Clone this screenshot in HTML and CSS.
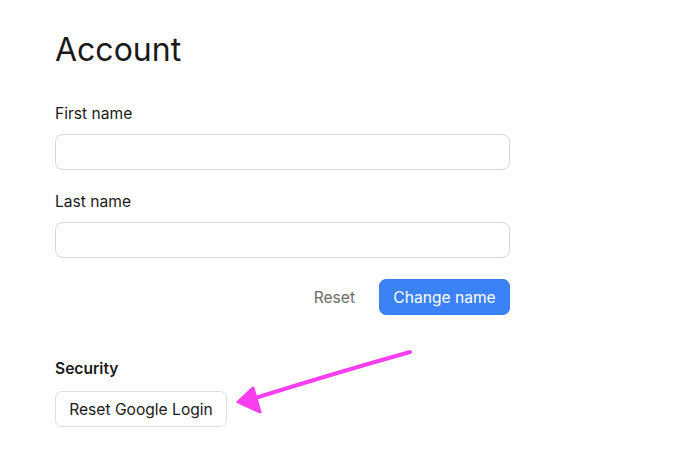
FILE: index.html
```html
<!DOCTYPE html>
<html lang="en">
<head>
    <meta charset="utf-8"/>
    <title>Account</title>
    <link rel="stylesheet" href="styles.css">
</head>
<body>
    <div class="page">
        <h1>Account</h1>

        <form class="name-form">
            <label class="field">
                <span class="label">First name</span>
                <input type="text" class="input">
            </label>
            <label class="field">
                <span class="label">Last name</span>
                <input type="text" class="input">
            </label>
            <div class="actions">
                <button type="button" class="btn-link">Reset</button>
                <button type="button" class="btn-primary">Change name</button>
            </div>
        </form>

        <div class="security">
            <h2>Security</h2>
            <button type="button" class="btn-outline">Reset Google Login</button>
        </div>
    </div>

    <!-- annotation arrow -->
    <svg class="arrow" width="690" height="469" viewBox="0 0 690 469">
        <path d="M410 352 C 360 366, 300 384, 252 399" fill="none" stroke="#f73ff0" stroke-width="4" stroke-linecap="round"/>
        <polygon points="238,402 253,388 260,412" fill="#f73ff0" stroke="#f73ff0" stroke-width="3" stroke-linejoin="round"/>
    </svg>
</body>
</html>
```

FILE: styles.css
```css
body {
    margin: 0;
    background: #fff;
    color: #1a1a1a;
    font-family: 'Inter', 'Liberation Sans', sans-serif;
}

.page {
    width: 455px;
    padding: 28px 0 0 55px;
}

h1 {
    font-size: 32px;
    font-weight: 400;
    margin: 0 0 30px;
    line-height: 44px;
}

.field {
    display: block;
    margin-bottom: 20px;
}

.label {
    display: block;
    font-size: 15.6px;
    line-height: 20px;
    padding-top: 2px;
    margin-bottom: 10px;
}

.input {
    display: block;
    box-sizing: border-box;
    width: 100%;
    height: 36px;
    border: 1px solid #d6d6d6;
    border-radius: 8px;
    background: #fff;
    font-family: inherit;
    font-size: 15px;
    padding: 0 12px;
}

.actions {
    display: flex;
    justify-content: flex-end;
    align-items: center;
    gap: 12px;
    margin-top: 21px;
}

.actions button,
.btn-outline {
    font-family: inherit;
    font-size: 15.6px;
    height: 36px;
    border-radius: 7px;
    cursor: pointer;
}

.btn-link {
    background: none;
    border: none;
    color: #6b6b6b;
    padding: 0 12px;
}

.btn-primary {
    background: #3b82f6;
    border: 1px solid #3a7fee;
    color: #fff;
    padding: 0;
    width: 131px;
}

.security {
    margin-top: 44px;
}

h2 {
    font-size: 15.6px;
    font-weight: 600;
    line-height: 20px;
    margin: 0 0 12px;
}

.btn-outline {
    background: #fff;
    border: 1px solid #e0e0e0;
    color: #1a1a1a;
    width: 172px;
    padding: 0;
}

.arrow {
    position: absolute;
    left: 0;
    top: 0;
    pointer-events: none;
}
```
